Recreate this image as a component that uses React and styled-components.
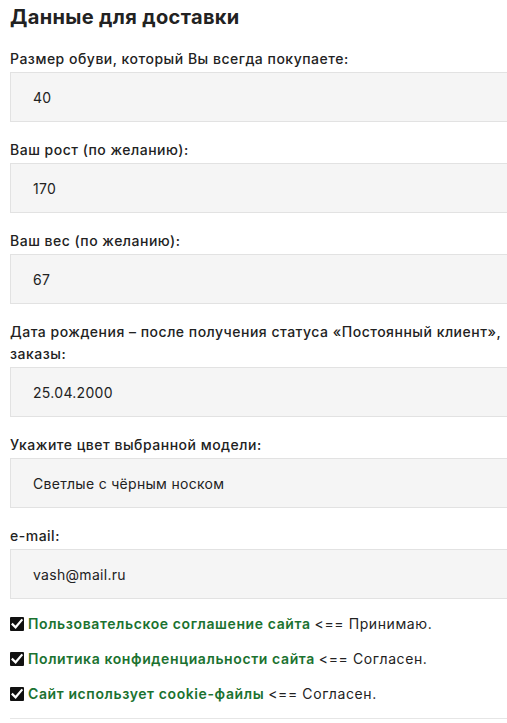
import React from 'react'
import styled, { createGlobalStyle } from 'styled-components'

const Global = createGlobalStyle`
  body {
    margin: 0;
    background: #fff;
    overflow-x: hidden;
    font-family: Inter, "Open Sans", "Liberation Sans", sans-serif;
    font-variant-ligatures: none;
    font-feature-settings: "calt" 0, "liga" 0;
    color: #222;
  }
`

const fields = [
  { label: 'Размер обуви, который Вы всегда покупаете:', value: '40' },
  { label: 'Ваш рост (по желанию):', value: '170' },
  { label: 'Ваш вес (по желанию):', value: '67' },
  {
    label: (
      <>
        Дата рождения – после получения статуса «Постоянный клиент»,
        <br />
        заказы:
      </>
    ),
    value: '25.04.2000',
  },
  { label: 'Укажите цвет выбранной модели:', value: 'Светлые с чёрным носком' },
  { label: 'e-mail:', value: 'vash@mail.ru' },
]

const agreements = [
  { link: 'Пользовательское соглашение сайта', text: '<== Принимаю.' },
  { link: 'Политика конфиденциальности сайта', text: '<== Согласен.' },
  { link: 'Сайт использует cookie-файлы', text: '<== Согласен.' },
]

function Check() {
  return (
    <Box>
      <svg width="14" height="14" viewBox="0 0 14 14">
        <rect width="14" height="14" rx="1" fill="#111" />
        <path d="M2.6 7.4 L5.6 10.3 L11.6 3.2" stroke="#fff" strokeWidth="2.2" fill="none" strokeLinecap="square" />
      </svg>
    </Box>
  )
}

function App() {
  return (
    <Page>
      <Global />
      <Title>Данные для доставки</Title>
      {fields.map((f, i) => (
        <Field key={i}>
          <Label>{f.label}</Label>
          <Input>{f.value}</Input>
        </Field>
      ))}
      <Agreements>
        {agreements.map((a, i) => (
          <Agree key={i}>
            <Check />
            <Link>{a.link}</Link>
            <span>{a.text}</span>
          </Agree>
        ))}
      </Agreements>
      <Divider />
    </Page>
  )
}

export default App

const Page = styled.div`
  width: 560px;
  padding: 4px 0 0 10px;
`

const Title = styled.h2`
  margin: 0 0 18px;
  font-size: 20px;
  line-height: 26px;
  font-weight: 700;
  letter-spacing: 0.35px;
  color: #222;
`

const Field = styled.div`
  margin-bottom: 17px;
`

const Label = styled.div`
  font-size: 14px;
  line-height: 22px;
  font-weight: 500;
  letter-spacing: 0.5px;
  margin-bottom: 2px;
`

const Input = styled.div`
  height: 48px;
  display: flex;
  align-items: center;
  padding-left: 22px;
  background: #f5f5f5;
  border: 1px solid #e2e2e2;
  font-size: 14px;
  letter-spacing: 0.3px;
  color: #222;
`

const Agreements = styled.div`
  display: flex;
  flex-direction: column;
  gap: 13px;
  margin-top: -3px;
`

const Agree = styled.div`
  display: flex;
  align-items: center;
  gap: 4px;
  font-size: 14px;
  line-height: 22px;
  letter-spacing: 0.6px;
`

const Box = styled.span`
  display: flex;
  align-items: center;
`

const Link = styled.span`
  color: #1b7230;
  font-weight: 600;
`

const Divider = styled.div`
  height: 1px;
  background: #e6e6e6;
  margin-top: 13px;
`
